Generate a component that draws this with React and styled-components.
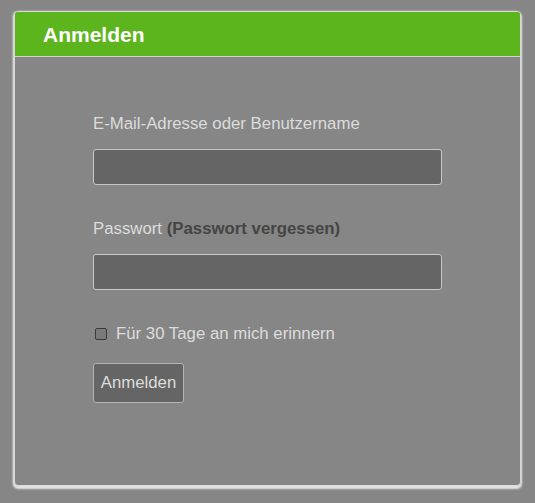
import React from "react";
import styled, { createGlobalStyle } from "styled-components";

const Global = createGlobalStyle`
  html, body { margin: 0; padding: 0; background: #868686; }
  body { font-family: "Liberation Sans", Arial, sans-serif; }
  * { box-sizing: border-box; }
`;

const Page = styled.div`
  padding: 11px 14px 0 14px;
  width: 535px;
  height: 503px;
`;

const Card = styled.div`
  width: 507px;
  height: 475px;
  border: 1px solid #dadada;
  border-radius: 4px;
  background: #868686;
  box-shadow: 0 2px 2px 1px #e4e4e4, -1px 0 2px #bdbdbd;
  overflow: hidden;
`;

const Header = styled.div`
  height: 45px;
  background: #5db51e;
  border-bottom: 1px solid #d2d2d2;
  display: flex;
  align-items: center;
  padding-left: 28px;
`;

const Title = styled.h2`
  margin: 0;
  font-size: 21px;
  font-weight: bold;
  color: #ffffff;
  line-height: 1;
  padding-top: 1px;
`;

const Body = styled.form`
  padding: 58px 0 0 78px;
  display: flex;
  flex-direction: column;
  align-items: flex-start;
`;

const Label = styled.label`
  font-size: 16.8px;
  line-height: 18px;
  color: #dcdcdc;
  margin-top: ${(p) => p.$top || 0}px;
`;

const Link = styled.span`
  font-weight: bold;
  color: #454545;
`;

const Input = styled.input`
  width: 349px;
  height: 36px;
  margin-top: 16px;
  background: #656565;
  border: 1px solid #c8c8c8;
  border-radius: 3px;
  outline: none;
  color: #eee;
  font: inherit;
`;

const CheckRow = styled.label`
  display: flex;
  align-items: center;
  margin-top: 35px;
  font-size: 16.8px;
  line-height: 18px;
  color: #dcdcdc;
  gap: 9px;
  padding-left: 2px;
`;

const Box = styled.span`
  width: 12px;
  height: 12px;
  border: 1px solid #3a3a3a;
  border-radius: 2px;
  background: #7a7a7a;
`;

const Button = styled.button`
  margin-top: 20px;
  width: 91px;
  height: 40px;
  background: #656565;
  border: 1px solid #b4b4b4;
  border-radius: 3px;
  color: #dcdcdc;
  font-family: "Liberation Sans", Arial, sans-serif;
  font-size: 16.8px;
  padding: 0;
`;

export default function App() {
  return (
    <>
      <Global />
      <Page>
        <Card>
          <Header>
            <Title>Anmelden</Title>
          </Header>
          <Body onSubmit={(e) => e.preventDefault()}>
            <Label>E-Mail-Adresse oder Benutzername</Label>
            <Input type="text" />
            <Label $top={35}>
              Passwort <Link>(Passwort vergessen)</Link>
            </Label>
            <Input type="password" />
            <CheckRow>
              <Box />
              Für 30 Tage an mich erinnern
            </CheckRow>
            <Button type="submit">Anmelden</Button>
          </Body>
        </Card>
      </Page>
    </>
  );
}
